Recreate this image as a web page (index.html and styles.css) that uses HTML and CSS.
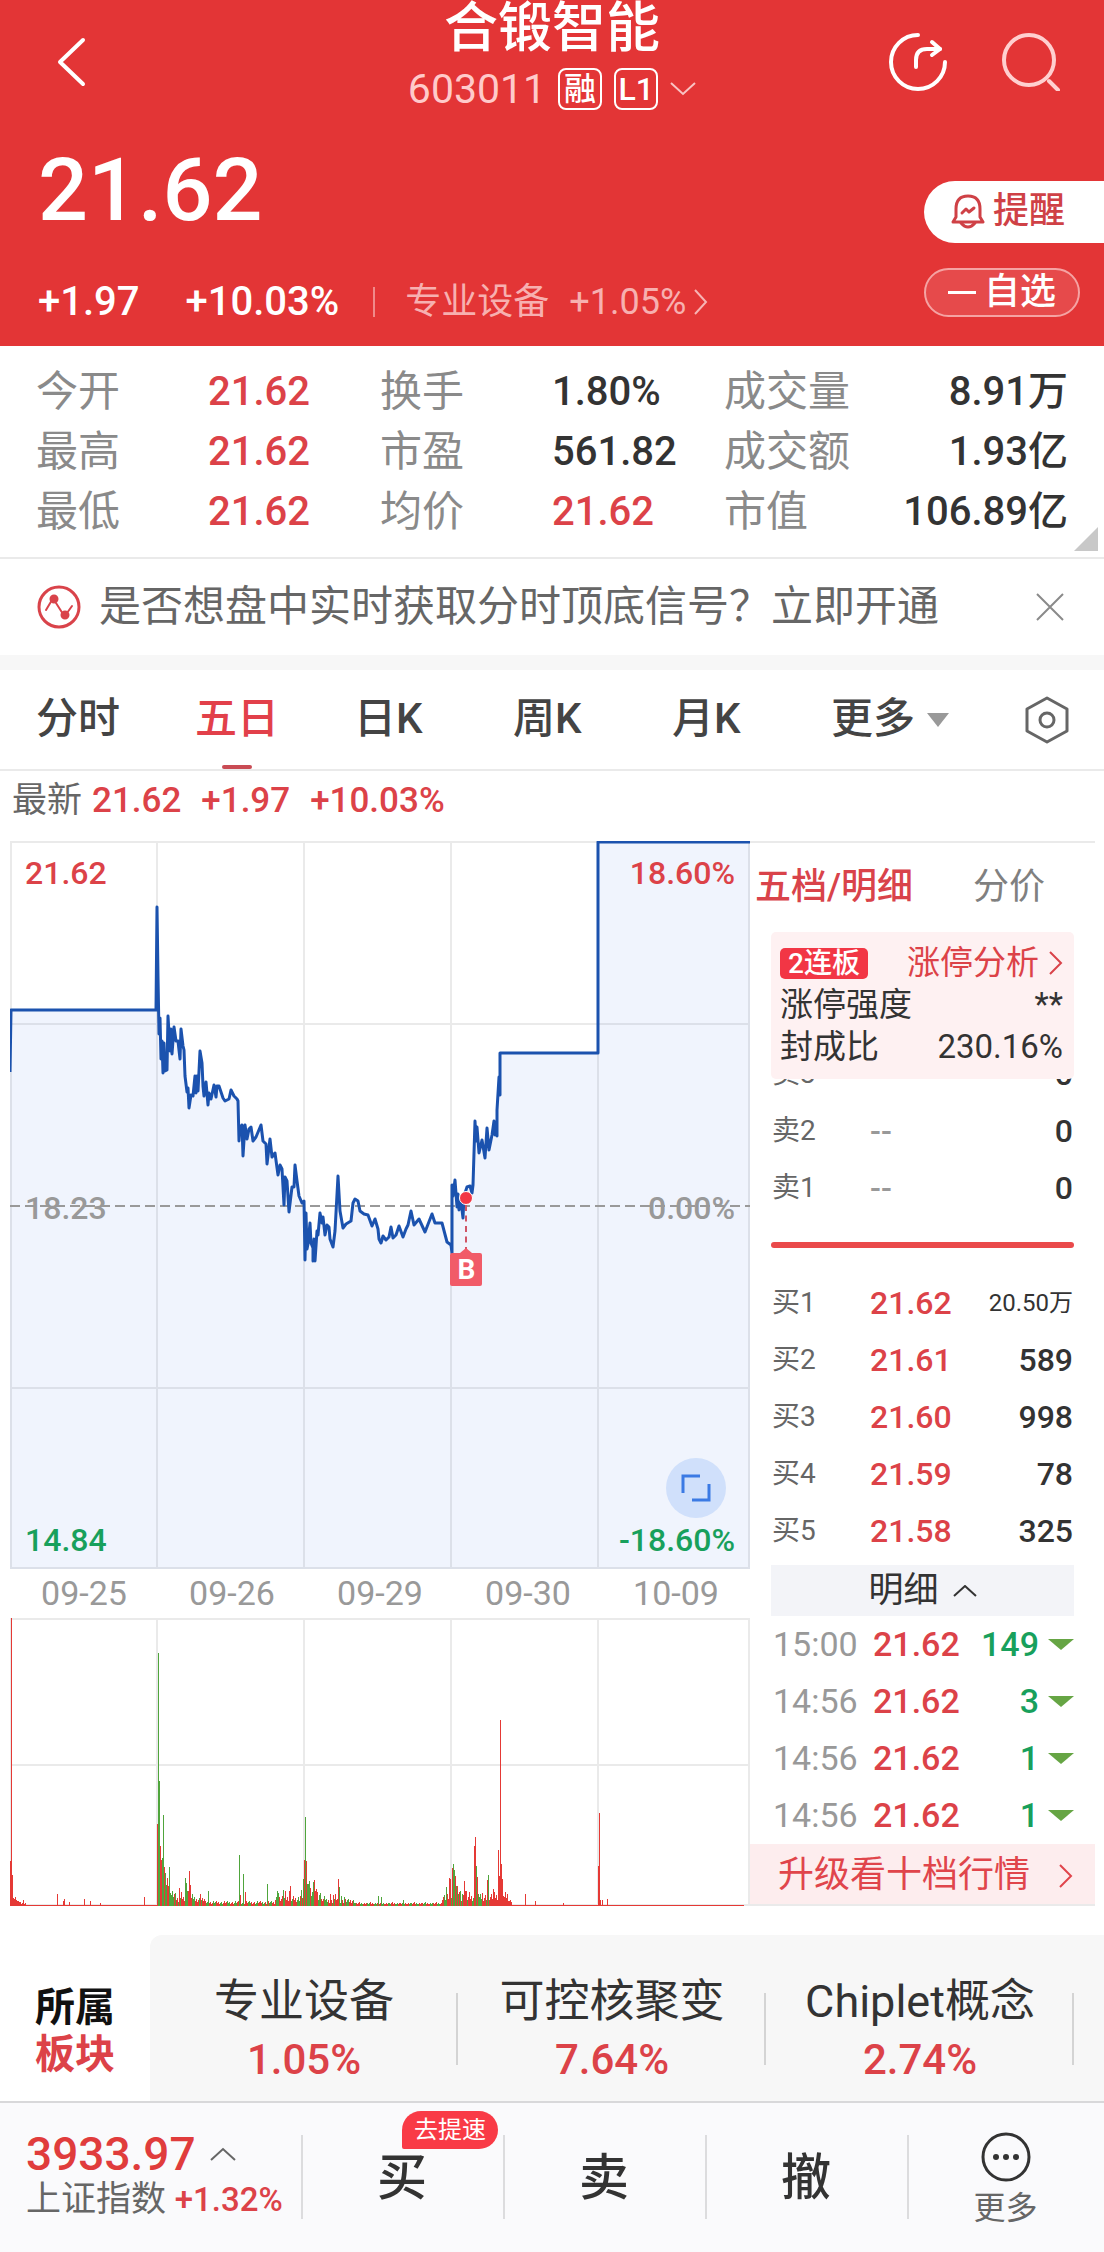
FILE: index.html
```html
<!DOCTYPE html>
<html lang="zh-CN">
<head>
  <meta charset="UTF-8">
  <meta name="viewport" content="width=device-width, initial-scale=1.0">
  <title>合锻智能 603011</title>
  <link rel="stylesheet" href="styles.css">
</head>
<body>
  <header class="header">
    <div class="topbar">
      <div class="topbar-left">
        <button class="icon-btn" aria-label="返回">
          <svg width="58" height="58" viewBox="0 0 58 58"><path d="M39 7 L16 29 L39 51" fill="none" stroke="#fff" stroke-width="4" stroke-linecap="round" stroke-linejoin="round"/></svg>
        </button>
      </div>
      <div class="topbar-center">
        <h1>合锻智能</h1>
        <div class="code-row">
          <span class="code">603011</span>
          <span class="tag">融</span>
          <span class="tag">L1</span>
          <svg width="26" height="14" viewBox="0 0 26 14"><path d="M1 1 L13 12 L25 1" fill="none" stroke="#f9c3c3" stroke-width="2"/></svg>
        </div>
      </div>
      <div class="topbar-right">
        <button class="icon-btn" aria-label="分享">
          <svg width="58" height="58" viewBox="0 0 58 58" fill="none" stroke="#fff" stroke-width="4" stroke-linecap="round" stroke-linejoin="round"><path d="M29 2 A27 27 0 1 0 56 29"/><path d="M27 34 V27 Q27 16 38 16 H51"/><path d="M43 9 L51 16 L43 22"/></svg>
        </button>
        <button class="icon-btn" aria-label="搜索">
          <svg width="58" height="58" viewBox="0 0 58 58" fill="none" stroke="#ffcfcf" stroke-width="4" stroke-linecap="round"><circle cx="27" cy="27" r="25"/><path d="M47 48 L56 57"/></svg>
        </button>
      </div>
    </div>

    <div class="quote">
      <div class="quote-main">
        <div class="price">21.62</div>
        <div class="change-row">
          <span class="change">+1.97</span>
          <span class="change">+10.03%</span>
          <a href="#" class="industry">专业设备 <span>+1.05%</span>
            <svg width="14" height="26" viewBox="0 0 14 26"><path d="M1 1 L12 13 L1 25" fill="none" stroke="#f7b4b4" stroke-width="2"/></svg>
          </a>
        </div>
      </div>
      <div class="quote-actions">
        <button class="remind">
          <svg width="34" height="36" viewBox="0 0 34 36" fill="none" stroke="#cf4146" stroke-width="3" stroke-linejoin="round" stroke-linecap="round"><path d="M5 23 V15 Q5 2 17 2 Q29 2 29 15 V23 L32 28 H2 Z"/><path d="M10 29 Q17 37 24 29"/><path d="M11 19 L15 15 L18 18 L23 14"/></svg>
          提醒
        </button>
        <button class="watch"><span class="minus"></span>自选</button>
      </div>
    </div>
  </header>

  <section class="stats">
    <dl>
      <div><dt>今开</dt><dd class="up">21.62</dd></div>
      <div><dt>换手</dt><dd>1.80%</dd></div>
      <div><dt>成交量</dt><dd>8.91万</dd></div>
      <div><dt>最高</dt><dd class="up">21.62</dd></div>
      <div><dt>市盈</dt><dd>561.82</dd></div>
      <div><dt>成交额</dt><dd>1.93亿</dd></div>
      <div><dt>最低</dt><dd class="up">21.62</dd></div>
      <div><dt>均价</dt><dd class="up">21.62</dd></div>
      <div><dt>市值</dt><dd>106.89亿</dd></div>
    </dl>
    <span class="expand-corner"></span>
  </section>

  <section class="notice">
    <svg width="44" height="44" viewBox="0 0 44 44" fill="none" stroke="#d9434a" stroke-width="3" stroke-linecap="round"><circle cx="22" cy="22" r="20"/><path d="M9 25 L15 15 M19 18 L26 29 M30 28 L35 21" stroke-width="2"/><circle cx="17" cy="14" r="3" fill="#d9434a"/><circle cx="28" cy="30" r="3" fill="#d9434a"/></svg>
    <a href="#">是否想盘中实时获取分时顶底信号？立即开通</a>
    <button class="icon-btn" aria-label="关闭">
      <svg width="28" height="28" viewBox="0 0 28 28"><path d="M1 1 L27 27 M27 1 L1 27" stroke="#8a8a8a" stroke-width="2"/></svg>
    </button>
  </section>

  <nav class="periods">
    <button>分时</button>
    <button class="active">五日</button>
    <button>日K</button>
    <button>周K</button>
    <button>月K</button>
    <button>更多<span class="caret"></span></button>
    <button class="settings" aria-label="设置">
      <svg width="46" height="48" viewBox="0 0 46 48" fill="none" stroke="#666" stroke-width="3" stroke-linejoin="round"><path d="M23 2 L43 13 V35 L23 46 L3 35 V13 Z"/><circle cx="23" cy="24" r="7"/></svg>
    </button>
  </nav>

  <div class="latest">
    <span>最新</span>
    <span class="up">21.62</span>
    <span class="up">+1.97</span>
    <span class="up">+10.03%</span>
  </div>

  <main class="market">
    <section class="charts">
      <div class="price-chart">
        <svg viewBox="0 0 740 728" preserveAspectRatio="none">
          <g class="grid">
            <path d="M1 0 V728 M147 0 V728 M294 0 V728 M441 0 V728 M588 0 V728 M739 0 V728"/>
            <path d="M0 1 H740 M0 183 H740 M0 547 H740 M0 727 H740"/>
          </g>
          <path id="priceArea" class="area"/>
          <path class="zero" d="M0 365 H740"/>
          <path id="priceLine" class="line"/>
        </svg>
        <span class="axis top-left up">21.62</span>
        <span class="axis top-right up">18.60%</span>
        <span class="axis mid-left">18.23</span>
        <span class="axis mid-right">0.00%</span>
        <span class="axis bottom-left down">14.84</span>
        <span class="axis bottom-right down">-18.60%</span>
        <div class="trade-mark">
          <span class="trade-dot"></span>
          <span class="trade-stem"></span>
          <span class="trade-flag">B</span>
        </div>
        <button class="fullscreen" aria-label="全屏">
          <svg width="30" height="30" viewBox="0 0 30 30" fill="none" stroke="#3b7ae4" stroke-width="3"><path d="M2 20 V3 H19 M28 11 V27 H11"/></svg>
        </button>
      </div>
      <div class="dates">
        <span>09-25</span><span>09-26</span><span>09-29</span><span>09-30</span><span>10-09</span>
      </div>
      <div class="volume-chart">
        <svg viewBox="0 0 740 288" preserveAspectRatio="none">
          <g class="grid">
            <path d="M1 0 V288 M147 0 V288 M294 0 V288 M441 0 V288 M588 0 V288 M739 0 V288"/>
            <path d="M0 1 H740 M0 147 H740 M0 287 H740"/>
          </g>
          <path id="volumeUp" class="vol-up"/>
          <path id="volumeDown" class="vol-down"/>
        </svg>
      </div>
    </section>

    <aside class="book">
      <div class="book-tabs">
        <button class="active">五档/明细</button>
        <button>分价</button>
      </div>

      <div class="limit-card">
        <div class="limit-row">
          <span class="streak">2连板</span>
          <a href="#" class="up">涨停分析
            <svg width="14" height="24" viewBox="0 0 14 24"><path d="M1 1 L12 12 L1 23" fill="none" stroke="#d9434a" stroke-width="2"/></svg>
          </a>
        </div>
        <div class="limit-row"><span>涨停强度</span><span>**</span></div>
        <div class="limit-row"><span>封成比</span><span>230.16%</span></div>
      </div>

      <table class="orders asks">
        <tr><th>卖3</th><td class="none">--</td><td>0</td></tr>
        <tr><th>卖2</th><td class="none">--</td><td>0</td></tr>
        <tr><th>卖1</th><td class="none">--</td><td>0</td></tr>
      </table>
      <div class="ratio"></div>
      <table class="orders">
        <tr><th>买1</th><td class="up">21.62</td><td class="small">20.50万</td></tr>
        <tr><th>买2</th><td class="up">21.61</td><td>589</td></tr>
        <tr><th>买3</th><td class="up">21.60</td><td>998</td></tr>
        <tr><th>买4</th><td class="up">21.59</td><td>78</td></tr>
        <tr><th>买5</th><td class="up">21.58</td><td>325</td></tr>
      </table>

      <button class="detail-toggle">明细
        <svg width="24" height="12" viewBox="0 0 24 12"><path d="M1 11 L12 1 L23 11" fill="none" stroke="#333" stroke-width="2"/></svg>
      </button>
      <table class="ticks">
        <tr><td class="time">15:00</td><td class="up">21.62</td><td class="down">149</td><td><span class="sell"></span></td></tr>
        <tr><td class="time">14:56</td><td class="up">21.62</td><td class="down">3</td><td><span class="sell"></span></td></tr>
        <tr><td class="time">14:56</td><td class="up">21.62</td><td class="down">1</td><td><span class="sell"></span></td></tr>
        <tr><td class="time">14:56</td><td class="up">21.62</td><td class="down">1</td><td><span class="sell"></span></td></tr>
      </table>
      <a href="#" class="upgrade">升级看十档行情
        <svg width="14" height="24" viewBox="0 0 14 24"><path d="M1 1 L12 12 L1 23" fill="none" stroke="#e0454b" stroke-width="2"/></svg>
      </a>
    </aside>
  </main>

  <section class="sectors">
    <h2>所属<br><span class="up">板块</span></h2>
    <div class="sector-list">
      <a href="#"><span>专业设备</span><span class="up">1.05%</span></a>
      <a href="#"><span>可控核聚变</span><span class="up">7.64%</span></a>
      <a href="#"><span>Chiplet概念</span><span class="up">2.74%</span></a>
    </div>
  </section>

  <footer class="bottom-bar">
    <a href="#" class="index">
      <span class="index-value">3933.97
        <svg width="26" height="14" viewBox="0 0 26 14"><path d="M1 13 L13 2 L25 13" fill="none" stroke="#666" stroke-width="2"/></svg>
      </span>
      <span class="index-name">上证指数 <span class="up">+1.32%</span></span>
    </a>
    <button class="trade">买<span class="promo">去提速</span></button>
    <button class="trade">卖</button>
    <button class="trade">撤</button>
    <button class="more">
      <svg width="52" height="52" viewBox="0 0 52 52"><circle cx="26" cy="26" r="23" fill="none" stroke="#333" stroke-width="3"/><circle cx="16" cy="26" r="3" fill="#333"/><circle cx="26" cy="26" r="3" fill="#333"/><circle cx="36" cy="26" r="3" fill="#333"/></svg>
      更多
    </button>
  </footer>

  <script src="chart.js"></script>
</body>
</html>
```
FILE: chart.js
```js
// five-day price line, chart units
const price = '0,231 1,169 146,169 147,66 148,135 149,193 150,177 151,218 152,200 153,232 154,202 155,230 157,229 158,175 160,210 161,188 162,213 164,186 166,200 168,200 170,218 171,188 173,205 174,209 175,235 177,251 178,247 179,267 181,254 183,255 185,235 186,252 187,235 188,250 190,210 192,222 193,245 194,255 196,241 198,264 199,252 201,258 204,244 206,256 207,245 209,245 213,257 215,260 219,258 221,249 224,255 227,258 228,260 229,300 230,285 231,291 232,284 233,315 235,284 237,298 239,288 241,286 243,300 246,296 251,284 253,300 256,303 257,323 260,298 262,316 265,312 268,334 270,324 272,328 274,364 275,336 277,340 279,371 282,346 284,346 285,324 287,340 289,355 292,362 294,360 295,419 296,372 297,408 298,403 300,382 301,402 303,407 303,420 304,398 305,420 307,390 308,394 310,372 312,382 313,376 315,394 317,384 319,386 320,398 323,406 325,390 328,335 330,370 333,387 336,383 341,380 343,362 345,358 348,360 350,370 354,373 358,374 362,385 365,378 368,388 369,398 371,402 373,395 376,399 379,396 381,386 383,397 386,394 389,385 393,396 396,388 398,384 401,370 404,384 409,378 415,391 422,373 425,382 432,382 437,401 441,404 442,412 442,344 443,355 445,339 447,366 448,353 449,369 451,360 453,377 454,355 457,346 460,345 462,352 463,344 465,280 466,300 467,286 469,312 472,299 475,317 477,287 479,309 482,294 484,280 485,294 486,282 487,295 487,269 489,236 490,254 490,212 588,212 588,1 740,1';
const points = price.split(' ').join(' L');

document.getElementById('priceLine').setAttribute('d', 'M' + points);
document.getElementById('priceArea').setAttribute('d', 'M0,728 L' + points + ' L740,728 Z');

// volume peaks as x:height, r = up, g = down
const peaks = {
  r: '0:45 1:288 2:31 3:8 4:7 5:9 6:6 7:5 8:5 9:4 13:6 15:3 47:12 53:5 54:7 59:4 74:7 80:5 90:3 134:9 147:82 150:60 151:46 154:39 157:28 158:20 169:18 171:14 178:15 179:35 180:21 190:12 230:11 235:14 275:15 279:15 280:20 294:46 296:45 300:18 304:26 306:17 307:14 320:12 323:11 325:12 328:27 439:28 440:27 442:38 445:30 447:20 449:14 454:25 455:15 456:15 459:14 464:60 465:69 467:29 472:13 477:26 483:17 484:14 488:56 489:30 490:186 491:42 492:27 493:10 494:9 495:14 496:8 497:12 498:5 500:6 515:12 525:5 553:3 588:40 589:93 590:6 592:6 597:7',
  g: '148:253 149:125 152:48 153:91 155:33 156:21 159:39 160:13 165:13 175:28 176:23 177:15 182:12 198:15 229:51 233:32 257:22 267:15 268:13 273:16 291:16 293:27 295:89 297:22 298:22 299:25 303:24 309:11 314:10 329:19 331:10 334:9 368:10 371:9 393:6 434:11 436:19 443:42 444:36 446:20 450:15 452:12 466:40 468:12 478:31'
};
const paths = { r: '', g: '' };
const used = {};

for (const side in peaks) {
  peaks[side].split(' ').forEach(function(item) {
    const [x, h] = item.split(':').map(Number);
    used[x] = true;
    paths[side] += `M${x + 0.5} 288v-${h}`;
  });
}

function baseVolume(x) {
  if (x < 16) return 4;
  if (x < 147) return 1;
  if (x < 165) return 12;
  if (x < 195) return 7;
  if (x < 265) return 4;
  if (x < 290) return 8;
  if (x < 312) return 12;
  if (x < 345) return 6;
  if (x < 432) return 3;
  if (x < 488) return 10;
  if (x < 502) return 6;
  return 1;
}

for (let x = 0; x < 734; x++) {
  if (used[x]) continue;
  const base = baseVolume(x);
  const h = base === 1 ? 1 : Math.max(2, Math.round(base * (0.5 + (x * 37 % 11) / 14)));
  const mixed = x > 147 && x < 480;
  paths[mixed && x * 29 % 7 < 3 ? 'g' : 'r'] += `M${x + 0.5} 288v-${h}`;
}

document.getElementById('volumeUp').setAttribute('d', paths.r);
document.getElementById('volumeDown').setAttribute('d', paths.g);
```
FILE: styles.css
```css
* {
  box-sizing: border-box;
}

body {
  margin: 0;
  background: #fff;
  color: #333;
  font-family: Roboto, "Noto Sans CJK SC", sans-serif;
  font-size: 42px;
  line-height: 1.2;
}

button {
  padding: 0;
  border: none;
  background: none;
  color: inherit;
  font: inherit;
  cursor: pointer;
}

a {
  color: inherit;
  text-decoration: none;
}

svg {
  display: block;
  flex-shrink: 0;
}

table {
  border-collapse: collapse;
}

.up {
  color: #dc4248;
}

.down {
  color: #18a05c;
}

/* header */
.header {
  background: #e33536;
  color: #fff;
  padding-bottom: 22px;
}

.topbar {
  display: grid;
  grid-template-columns: 171px 1fr 171px;
  align-items: center;
  padding: 0 44px;
}

.topbar-left,
.topbar-right {
  display: flex;
  justify-content: space-between;
  padding-top: 12px;
}

.topbar-center {
  text-align: center;
}

h1 {
  margin: 0;
  font-size: 54px;
  font-weight: 500;
  line-height: 58px;
}

.code-row {
  display: flex;
  align-items: center;
  justify-content: center;
  gap: 12px;
  margin-top: 9px;
  line-height: 44px;
}

.code {
  font-size: 41px;
  color: #ffcaca;
}

.tag {
  width: 44px;
  height: 42px;
  border: 2px solid #fff;
  border-radius: 8px;
  font-size: 32px;
  font-weight: 500;
  line-height: 38px;
}

.quote {
  display: flex;
  justify-content: space-between;
  margin-top: 25px;
  padding-left: 38px;
}

.price {
  font-size: 88px;
  font-weight: 500;
  line-height: 108px;
}

.change-row {
  display: flex;
  align-items: center;
  gap: 46px;
  margin-top: 36px;
  line-height: 44px;
}

.change {
  font-size: 40px;
  font-weight: 500;
}

.industry {
  display: flex;
  align-items: center;
  gap: 20px;
  margin-left: 20px;
  font-size: 36px;
  color: #f7b0b0;
}

.industry::before {
  content: "";
  width: 2px;
  height: 30px;
  margin-left: -32px;
  margin-right: 10px;
  background: #f08a8a;
}

.industry svg {
  margin-left: -12px;
}

.quote-actions {
  width: 180px;
  padding-top: 45px;
}

.remind {
  display: flex;
  align-items: center;
  gap: 8px;
  width: 100%;
  height: 62px;
  padding-left: 27px;
  border-radius: 31px 0 0 31px;
  background: #fff;
  color: #cf4146;
  font-size: 36px;
  font-weight: 500;
}

.watch {
  display: flex;
  align-items: center;
  justify-content: center;
  gap: 8px;
  width: 156px;
  height: 49px;
  margin-top: 25px;
  border: 2px solid #f5a3a3;
  border-radius: 25px;
  background: #e64a4b;
  font-size: 36px;
  font-weight: 500;
}

.minus {
  width: 28px;
  height: 3px;
  background: #fff;
}

/* stats */
.stats {
  position: relative;
  padding: 16px 36px 15px;
  border-bottom: 2px solid #eaeaea;
}

.stats dl {
  display: grid;
  grid-template-columns: repeat(3, 1fr);
  margin: 0;
}

.stats dl div {
  display: flex;
  line-height: 60px;
}

.stats dt {
  width: 172px;
  color: #8a8a8a;
}

.stats dd {
  margin: 0;
  font-size: 40px;
  font-weight: 500;
  white-space: nowrap;
}

.stats div:nth-child(3n) dt {
  width: auto;
}

.stats div:nth-child(3n) dd {
  flex: 1;
  text-align: right;
}

.expand-corner {
  position: absolute;
  right: 6px;
  bottom: 6px;
  border-left: 24px solid transparent;
  border-bottom: 24px solid #c8c8c8;
}

/* notice */
.notice {
  display: flex;
  align-items: center;
  height: 111px;
  padding: 0 40px 0 37px;
  border-bottom: 15px solid #f7f7f7;
  color: #666;
}

.notice a {
  flex: 1;
  margin-left: 18px;
  white-space: nowrap;
}

/* period tabs */
.periods {
  display: grid;
  grid-template-columns: repeat(6, 159fr) 80fr;
  justify-items: start;
  height: 101px;
  padding: 0 34px 0 36px;
  border-bottom: 2px solid #eaeaea;
}

.periods button {
  position: relative;
  display: flex;
  align-items: center;
  height: 100%;
  font-weight: 500;
  color: #444;
}

.periods .settings {
  justify-self: end;
}

.periods .active {
  color: #e2404a;
}

.periods .active::after {
  content: "";
  position: absolute;
  left: 50%;
  bottom: 0;
  width: 30px;
  height: 4px;
  margin-left: -15px;
  border-radius: 2px;
  background: #c94b54;
}

.caret {
  margin-left: 12px;
  border: 11px solid transparent;
  border-top: 14px solid #999;
  border-bottom: none;
}

.latest {
  display: flex;
  gap: 20px;
  height: 70px;
  padding-left: 12px;
  font-size: 35px;
  line-height: 60px;
  color: #666;
}

.latest span:first-child {
  margin-right: -10px;
}

.latest .up {
  font-weight: 500;
}

/* charts */
.market {
  display: grid;
  grid-template-columns: 1fr 345px;
  padding: 0 9px 0 10px;
}

.price-chart {
  position: relative;
  height: 728px;
}

.price-chart > svg,
.volume-chart > svg {
  width: 100%;
  height: 100%;
}

.grid path {
  fill: none;
  stroke: #eaeaea;
  stroke-width: 2;
}

.area {
  fill: rgba(60, 120, 230, 0.08);
}

.line {
  fill: none;
  stroke: #1b52ae;
  stroke-width: 3;
  stroke-linejoin: round;
}

.zero {
  stroke: #999;
  stroke-width: 2;
  stroke-dasharray: 10 5;
}

.axis {
  position: absolute;
  font-size: 32px;
  font-weight: 500;
  line-height: 36px;
}

.top-left,
.top-right {
  top: 14px;
}

.mid-left,
.mid-right {
  top: 349px;
  color: #999;
}

.bottom-left,
.bottom-right {
  bottom: 11px;
}

.top-left,
.mid-left,
.bottom-left {
  left: 15px;
}

.top-right,
.mid-right,
.bottom-right {
  right: 15px;
}

.trade-mark {
  position: absolute;
  left: 61%;
  top: 350px;
  display: flex;
  flex-direction: column;
  align-items: center;
  width: 32px;
  margin-left: -11px;
}

.trade-dot {
  width: 14px;
  height: 14px;
  border: 1px solid #fff;
  border-radius: 50%;
  background: #f23645;
}

.trade-stem {
  height: 48px;
  border-left: 2px dashed #cf5566;
}

.trade-flag {
  position: relative;
  width: 32px;
  height: 33px;
  border-radius: 2px;
  background: #f15b68;
  color: #fff;
  font-size: 28px;
  font-weight: 700;
  line-height: 33px;
  text-align: center;
}

.trade-flag::before {
  content: "";
  position: absolute;
  left: 10px;
  top: -5px;
  border: 6px solid transparent;
  border-bottom: 5px solid #f15b68;
  border-top: none;
}

.fullscreen {
  position: absolute;
  right: 24px;
  bottom: 51px;
  display: flex;
  align-items: center;
  justify-content: center;
  width: 60px;
  height: 60px;
  border-radius: 50%;
  background: #d0e0fb;
}

.dates {
  display: grid;
  grid-template-columns: repeat(5, 1fr);
  font-size: 34px;
  line-height: 49px;
  text-align: center;
  color: #999;
}

.volume-chart {
  height: 288px;
}

.vol-up {
  stroke: #e53935;
}

.vol-down {
  stroke: #4fa53c;
}

/* order book */
.book {
  border-top: 2px solid #eaeaea;
  border-bottom: 2px solid #eaeaea;
}

.book-tabs {
  display: flex;
  gap: 60px;
  height: 89px;
  padding-left: 5px;
  font-size: 36px;
  color: #808080;
}

.book-tabs .active {
  color: #d9434a;
  font-weight: 500;
}

.limit-card {
  position: relative;
  z-index: 1;
  height: 147px;
  margin: 0 21px;
  padding: 10px 11px 0 9px;
  border-radius: 5px;
  background: #fef1f2;
  font-size: 33px;
}

.limit-row {
  display: flex;
  align-items: center;
  justify-content: space-between;
  line-height: 42px;
}

.limit-row a {
  display: flex;
  align-items: center;
  gap: 10px;
}

.streak {
  padding: 0 8px;
  border-radius: 5px;
  background: #f23645;
  color: #fff;
  font-size: 28px;
  font-weight: 500;
  line-height: 31px;
}

.orders {
  width: 301px;
  margin-left: 22px;
  font-size: 32px;
}

.orders th,
.orders td {
  height: 57px;
  padding: 0;
  line-height: 36px;
  text-align: left;
}

.orders th {
  width: 98px;
  font-size: 28px;
  font-weight: 400;
  color: #666;
}

.orders td {
  font-weight: 500;
}

.orders td:last-child {
  text-align: right;
}

.orders .none {
  color: #999;
}

.orders .small {
  font-size: 24px;
  font-weight: 400;
}

/* the third ask row slides under the card */
.asks {
  margin-top: -34px;
}

.ratio {
  height: 6px;
  margin: 26px 21px;
  border-radius: 3px;
  background: #ea4a4b;
}

.detail-toggle {
  display: flex;
  align-items: center;
  justify-content: center;
  gap: 14px;
  width: 303px;
  height: 51px;
  margin: 6px 21px 0;
  background: #f3f4f8;
  font-size: 35px;
}

.ticks {
  width: 303px;
  margin-left: 21px;
  font-size: 34px;
}

.ticks td {
  height: 57px;
  padding: 0;
}

.ticks .time {
  width: 102px;
  padding-left: 2px;
  color: #999;
}

.ticks .up,
.ticks .down {
  font-weight: 500;
}

.ticks .down {
  text-align: right;
}

.ticks td:last-child {
  width: 35px;
}

.sell {
  display: block;
  margin-left: 9px;
  border: 13px solid transparent;
  border-top: 11px solid #66a544;
  border-bottom: none;
}

.upgrade {
  display: flex;
  align-items: center;
  justify-content: space-between;
  height: 60px;
  padding: 4px 22px 0 28px;
  background: #fdedee;
  color: #e0454b;
  font-size: 36px;
}

/* sectors */
.sectors {
  display: flex;
  height: 166px;
  margin-top: 29px;
}

h2 {
  width: 150px;
  margin: 0;
  padding-top: 49px;
  font-size: 40px;
  font-weight: 700;
  line-height: 47px;
  text-align: center;
  color: #111;
}

.sector-list {
  display: grid;
  grid-template-columns: repeat(3, 1fr);
  flex: 1;
  padding-right: 30px;
  border-radius: 12px 0 0 0;
  background: #f7f7f7;
}

.sector-list a {
  position: relative;
  display: flex;
  flex-direction: column;
  align-items: center;
  padding-top: 38px;
  font-size: 45px;
  line-height: 58px;
  white-space: nowrap;
}

.sector-list .up {
  font-size: 42px;
  font-weight: 500;
}

.sector-list a::after {
  content: "";
  position: absolute;
  right: 0;
  top: 58px;
  width: 2px;
  height: 72px;
  background: #d4d4d4;
}

/* bottom bar */
.bottom-bar {
  display: grid;
  grid-template-columns: 301px repeat(3, 202fr) 197fr;
  height: 151px;
  border-top: 2px solid #d8d8da;
  background: #fafafc;
}

.index {
  padding: 24px 0 0 26px;
  white-space: nowrap;
}

.index-value {
  display: flex;
  align-items: center;
  gap: 14px;
  font-size: 46px;
  font-weight: 500;
  line-height: 54px;
  color: #e03c3c;
}

.index-name {
  display: block;
  font-size: 35px;
  line-height: 38px;
  color: #666;
}

.index-name .up {
  font-size: 33px;
  font-weight: 500;
}

.trade,
.more {
  position: relative;
}

.trade {
  font-size: 50px;
  font-weight: 500;
}

.trade::before,
.more::before {
  content: "";
  position: absolute;
  left: 0;
  top: 32px;
  width: 2px;
  height: 84px;
  background: #dcdcde;
}

.promo {
  position: absolute;
  left: 50%;
  top: 8px;
  padding: 0 12px;
  border-radius: 19px 19px 19px 2px;
  background: #f93a46;
  color: #fff;
  font-size: 24px;
  font-weight: 400;
  line-height: 38px;
}

.more {
  display: flex;
  flex-direction: column;
  align-items: center;
  padding-top: 28px;
  font-size: 32px;
  line-height: 50px;
  color: #666;
}
```
